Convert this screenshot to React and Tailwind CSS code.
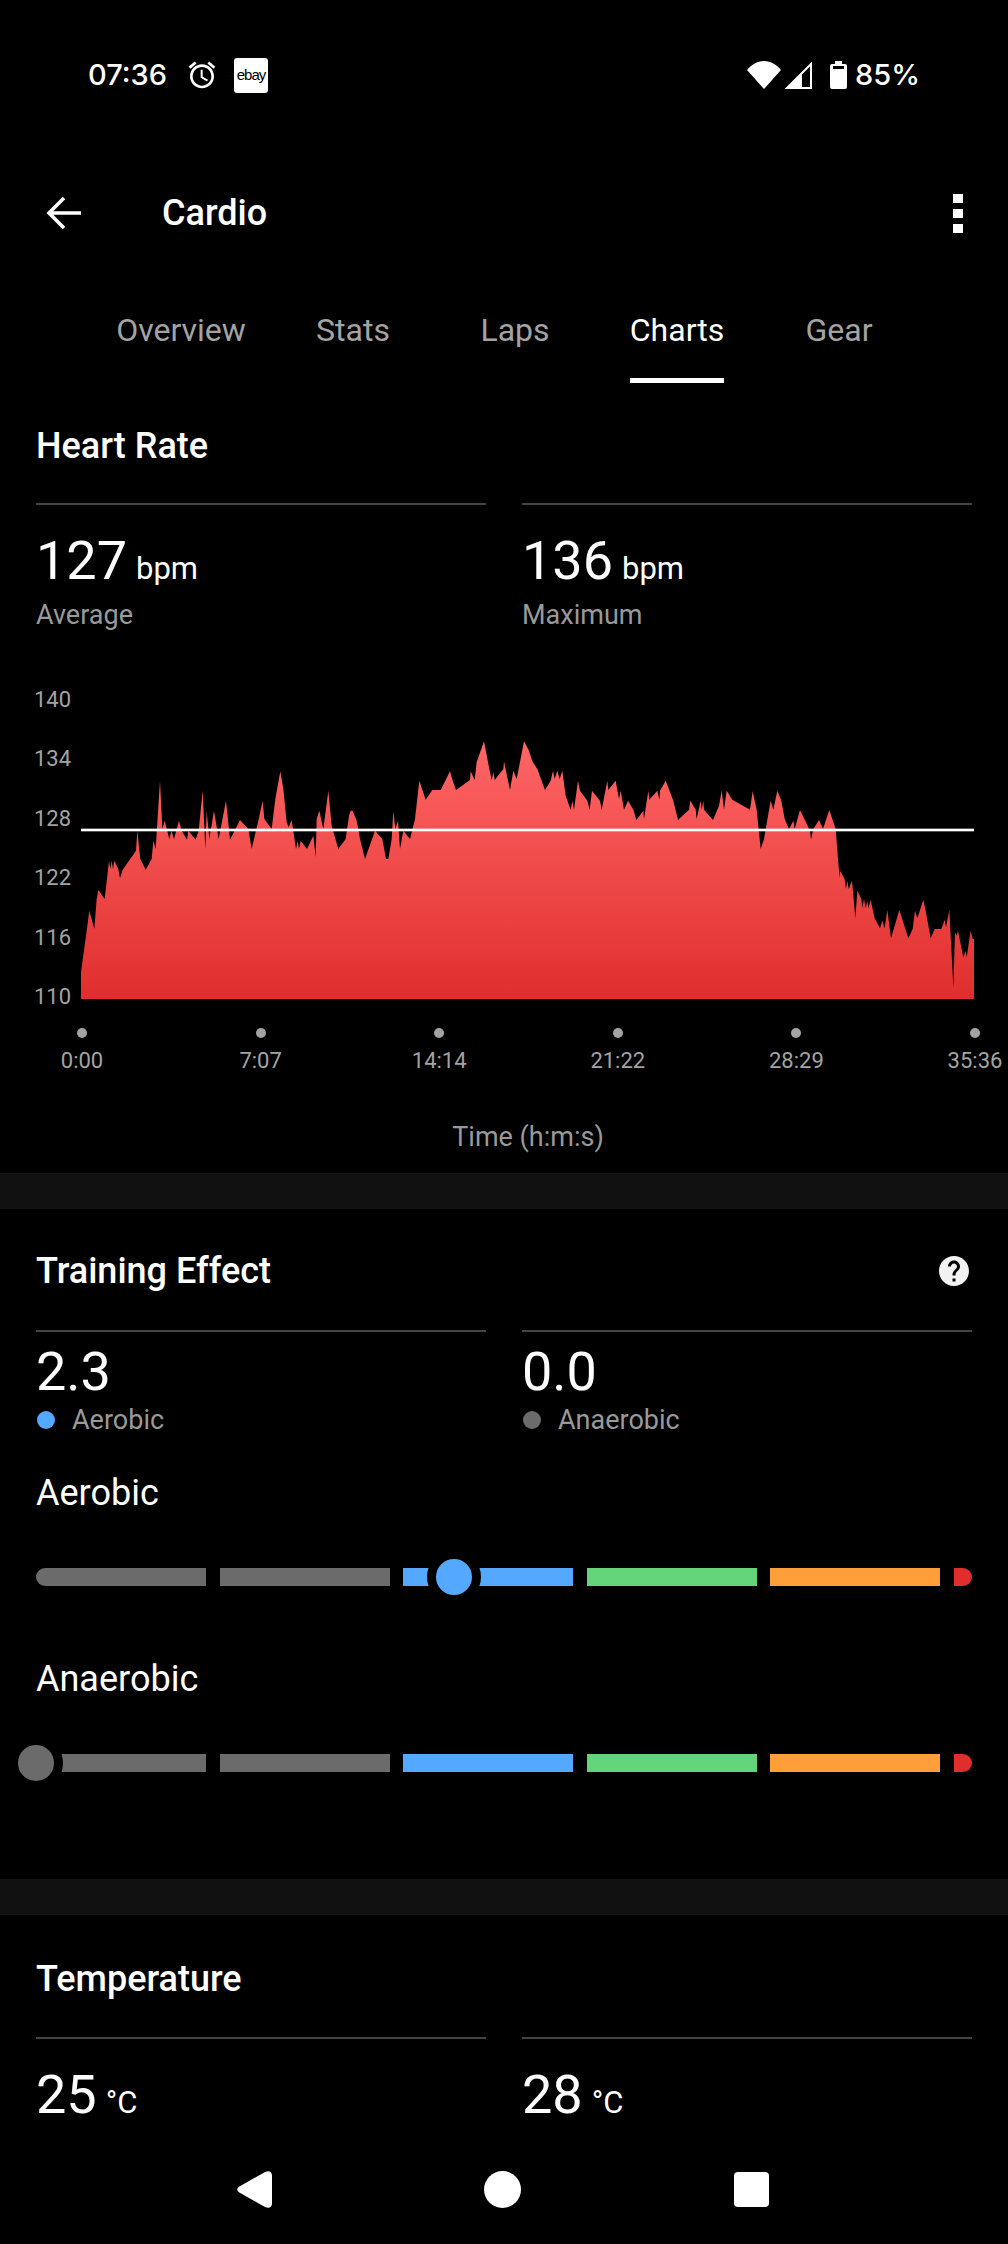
import React from "react";

const leftTrace = "243,960 243,880 247,850 258,770 268,695 283,750 290,660 295,633 314,660 327,545 331,570 335,545 339,570 343,545 355,570 360,598 368,572 408,515 412,455 421,540 437,572 455,540 460,485 467,510 480,305 487,450 494,425 508,480 514,455 522,480 537,425 545,455 561,482 565,455 587,482 596,455 608,335 616,510 620,395 628,480 642,395 656,480 678,365 690,482 720,423 745,450 755,510 775,425 788,365 793,420 815,450 826,360 841,277 850,330 860,430 866,445 875,423 888,510 893,485 897,510 902,485 921,510 940,470 947,535 950,420 958,395 970,450 985,335 995,440 1015,510 1037,480 1047,410 1052,395 1058,395 1070,425 1080,480 1095,540 1125,455 1147,480 1158,540 1165,540 1175,480 1180,395 1186,450 1194,425 1200,510 1210,455 1230,480 1245,420 1258,305 1277,362 1297,333 1322,333 1350,277 1358,305 1368,333 1410,303 1412,277 1424,303 1430,250 1452,187 1468,270 1475,303 1480,280 1484,303 1510,270";

const rightTrace = [
  [0, 247], [18, 333], [28, 275], [38, 300], [60, 187], [75, 215], [85, 247], [100, 270], [123, 333], [140, 305], [147, 275], [152, 300], [160, 275], [167, 300], [175, 275], [185, 350], [200, 392], [205, 365], [210, 392], [222, 305], [228, 335], [250, 365], [257, 392], [264, 335], [288, 365], [293, 392], [310, 305], [313, 333], [335, 305], [345, 360], [350, 335], [360, 392], [372, 365], [388, 392], [397, 423], [418, 395], [420, 420], [433, 335], [436, 362], [460, 335], [466, 362], [468, 335], [485, 305], [508, 365], [522, 423], [555, 392], [559, 365], [575, 392], [578, 420], [590, 365], [593, 392], [598, 365], [600, 392], [627, 423], [645, 380], [653, 335], [660, 392], [668, 335], [685, 362], [738, 392], [746, 337], [758, 392], [770, 510], [780, 480], [800, 365], [808, 392], [820, 335], [832, 365], [842, 420], [855, 450], [868, 425], [872, 450], [888, 393], [918, 455], [921, 482], [928, 450], [945, 423], [957, 450], [976, 393], [995, 450], [1002, 540], [1007, 598], [1008, 575], [1022, 600], [1026, 630], [1030, 605], [1034, 630], [1044, 605], [1054, 718], [1060, 635], [1072, 660], [1075, 688], [1080, 660], [1085, 688], [1090, 665], [1093, 688], [1100, 663], [1112, 718], [1128, 748], [1135, 725], [1142, 748], [1150, 693], [1161, 778], [1186, 693], [1213, 778], [1226, 750], [1233, 695], [1240, 718], [1258, 662], [1264, 690], [1275, 750], [1280, 778], [1292, 750], [1312, 750], [1322, 722], [1326, 745], [1336, 693], [1348, 925], [1353, 760], [1358, 770], [1362, 755], [1378, 835], [1385, 815], [1388, 835], [1400, 755], [1406, 780], [1410, 780], [1410, 960],
]
  .map(([x, y]) => `${x + 1512},${y}`)
  .join(" ");

const yLabels = ["140", "134", "128", "122", "116", "110"];
const xLabels = ["0:00", "7:07", "14:14", "21:22", "28:29", "35:36"];
const tabs = [
  { label: "Overview", width: "w-[182px]" },
  { label: "Stats", width: "w-[162px]" },
  { label: "Laps", width: "w-[162px]" },
  { label: "Charts", width: "w-[162px]", active: true },
  { label: "Gear", width: "w-[162px]" },
];

const Stat = ({ value, unit, pad = "pt-[24px]", children }) => (
  <div className={`w-[450px] border-t-2 border-[#444444] ${pad}`}>
    <div className="flex items-baseline">
      <span className="text-[54px] leading-[64px] text-white">{value}</span>
      {unit && <span className="ml-[9px] text-[31px] text-white">{unit}</span>}
    </div>
    {children}
  </div>
);

const Segment = ({ color, className = "" }) => (
  <div className={`h-[18px] w-[170px] ${color} ${className}`} />
);

const EffectBar = ({ thumbClass, thumbColor }) => (
  <div className="relative ml-[36px] flex w-[936px] items-center justify-between">
    <Segment color="bg-[#6b6b6b]" className="rounded-l-[9px]" />
    <Segment color="bg-[#6b6b6b]" />
    <Segment color="bg-[#55a8ff]" />
    <Segment color="bg-[#64d47a]" />
    <Segment color="bg-[#ff9f3a]" />
    <div className="h-[18px] w-[18px] rounded-r-[9px] bg-[#e02e2e]" />
    <div
      className={`absolute top-[-18px] h-[54px] w-[54px] rounded-full border-[9px] border-black ${thumbColor} ${thumbClass}`}
    />
  </div>
);

const App = () => {
  return (
    <div
      className="relative h-[2244px] w-[1008px] overflow-hidden bg-black text-white"
      style={{ fontFamily: "Roboto, sans-serif" }}
    >
      {/* status bar */}
      <div className="mt-[50px] flex h-[50px] items-center pl-[88px] pr-[88px] font-['Inter',sans-serif]">
        <span className="text-[29px] font-medium">07:36</span>
        <svg viewBox="0 0 24 24" className="ml-[19px] h-[32px] w-[32px]" fill="white">
          <path d="M22 5.72l-4.6-3.86-1.29 1.53 4.6 3.86L22 5.72zM7.88 3.39L6.6 1.86 2 5.71l1.29 1.53 4.59-3.85zM12.5 8H11v6l4.75 2.85.75-1.23-4-2.37V8zM12 4c-4.97 0-9 4.03-9 9s4.03 9 9 9 9-4.03 9-9-4.03-9-9-9zm0 16c-3.87 0-7-3.13-7-7s3.13-7 7-7 7 3.13 7 7-3.13 7-7 7z" />
        </svg>
        <div className="ml-[16px] flex h-[35px] w-[34px] items-center justify-center rounded-[3px] bg-white font-['Liberation_Sans',sans-serif] text-[15px] tracking-[-1px] text-black">
          ebay
        </div>
        <div className="flex-1" />
        <svg viewBox="0 0 34 28" className="h-[28px] w-[34px]" fill="white">
          <path d="M0 9C4 4 10 0 17 0s13 4 17 9L17 28z" />
        </svg>
        <svg viewBox="0 0 27 27" className="ml-[4px] h-[27px] w-[27px]">
          <path d="M26 2v24H2z" fill="none" stroke="white" strokeWidth="2" />
          <path d="M17 27V11L1 27z" fill="white" />
        </svg>
        <svg viewBox="0 0 17 28" className="ml-[18px] h-[28px] w-[17px]" fill="white">
          <path d="M5 0h7v3h3a2 2 0 0 1 2 2v21a2 2 0 0 1-2 2H2a2 2 0 0 1-2-2V5a2 2 0 0 1 2-2h3z" />
          <rect x="3" y="5" width="11" height="3" fill="black" />
        </svg>
        <span className="ml-[8px] text-[29px] font-medium">85%</span>
      </div>

      {/* toolbar */}
      <div className="mt-[73px] flex h-[80px] items-center pl-[46px] pr-[45px]">
        <svg viewBox="0 0 35 34" className="h-[34px] w-[35px]" fill="none" stroke="white" strokeWidth="3.6">
          <path d="M35 17H3M18 2L3 17l15 15" />
        </svg>
        <span className="ml-[81px] text-[36px] font-medium">Cardio</span>
        <div className="flex-1" />
        <div className="flex flex-col gap-[6px]">
          <div className="h-[9px] w-[10px] bg-white" />
          <div className="h-[9px] w-[10px] bg-white" />
          <div className="h-[9px] w-[10px] bg-white" />
        </div>
      </div>

      {/* tabs */}
      <div className="mt-[37px] flex h-[93px] pl-[90px]">
        {tabs.map((tab) => (
          <div key={tab.label} className={`${tab.width} flex justify-center`}>
            <div
              className={`h-[93px] text-[32px] leading-[80px] ${
                tab.active ? "border-b-[5px] border-white text-white" : "text-[#a3a3a3]"
              }`}
            >
              {tab.label}
            </div>
          </div>
        ))}
      </div>

      {/* heart rate */}
      <div className="mt-[43px] h-[40px] pl-[36px] text-[36px] font-medium leading-[40px]">Heart Rate</div>
      <div className="mt-[37px] flex justify-between px-[36px]">
        <Stat value="127" unit="bpm">
          <div className="mt-[4px] text-[27px] leading-[36px] text-[#999999]">Average</div>
        </Stat>
        <Stat value="136" unit="bpm">
          <div className="mt-[4px] text-[27px] leading-[36px] text-[#999999]">Maximum</div>
        </Stat>
      </div>

      {/* chart */}
      <div className="mt-[54px] flex h-[322px]">
        <div className="flex h-[322px] w-[81px] flex-col justify-between pl-[34px] pt-[1px] text-[22px] leading-[24px] text-[#a3a3a3]">
          {yLabels.map((label) => (
            <div key={label}>{label}</div>
          ))}
        </div>
        <svg viewBox="243 24 2679 966" className="h-[322px] w-[893px]">
          <defs>
            <linearGradient id="hrFill" gradientUnits="userSpaceOnUse" x1="0" y1="187" x2="0" y2="960">
              <stop offset="0" stopColor="#ff6666" />
              <stop offset="1" stopColor="#e02e2e" />
            </linearGradient>
          </defs>
          <polygon points={`${leftTrace} ${rightTrace}`} fill="url(#hrFill)" />
          <rect x="243" y="449" width="2679" height="8" fill="white" />
        </svg>
      </div>
      <div className="mt-[19px] flex w-[1008px] justify-between pl-[82px] pr-[33px]">
        {xLabels.map((label) => (
          <div key={label} className="flex w-0 flex-col items-center">
            <div className="h-[10px] w-[10px] shrink-0 rounded-full bg-[#a3a3a3]" />
            <div className="mt-[6px] text-[22px] leading-[34px] text-[#a3a3a3]">{label}</div>
          </div>
        ))}
      </div>
      <div className="mt-[41px] pl-[48px] text-center text-[27px] leading-[36px] text-[#999999]">Time (h:m:s)</div>
      <div className="mt-[18px] h-[36px] bg-[#111111]" />

      {/* training effect */}
      <div className="mt-[42px] flex h-[40px] items-center justify-between pl-[36px] pr-[39px]">
        <span className="text-[36px] font-medium leading-[40px]">Training Effect</span>
        <svg viewBox="2 2 20 20" className="h-[30px] w-[30px]" fill="#f2f2f2">
          <path d="M12 2C6.48 2 2 6.48 2 12s4.48 10 10 10 10-4.48 10-10S17.52 2 12 2zm1 17h-2v-2h2v2zm2.07-7.75l-.9.92C13.45 12.9 13 13.5 13 15h-2v-.5c0-1.1.45-2.1 1.17-2.83l1.24-1.26c.37-.36.59-.86.59-1.41 0-1.1-.9-2-2-2s-2 .9-2 2H8c0-2.21 1.79-4 4-4s4 1.79 4 4c0 .88-.36 1.68-.93 2.25z" />
        </svg>
      </div>
      <div className="mt-[39px] flex justify-between px-[36px]">
        <Stat value="2.3" pad="pt-[8px]">
          <div className="-mt-[1px] flex h-[34px] items-center pl-[1px] text-[27px] text-[#999999]">
            <div className="h-[18px] w-[18px] rounded-full bg-[#55a8ff]" />
            <span className="ml-[17px]">Aerobic</span>
          </div>
        </Stat>
        <Stat value="0.0" pad="pt-[8px]">
          <div className="-mt-[1px] flex h-[34px] items-center pl-[1px] text-[27px] text-[#999999]">
            <div className="h-[18px] w-[18px] rounded-full bg-[#6b6b6b]" />
            <span className="ml-[17px]">Anaerobic</span>
          </div>
        </Stat>
      </div>
      <div className="mt-[36px] h-[40px] pl-[36px] text-[36px] leading-[40px]">Aerobic</div>
      <div className="mt-[55px]">
        <EffectBar thumbClass="left-[391px]" thumbColor="bg-[#55a8ff]" />
      </div>
      <div className="mt-[73px] h-[40px] pl-[36px] text-[36px] leading-[40px]">Anaerobic</div>
      <div className="mt-[55px]">
        <EffectBar thumbClass="-left-[27px]" thumbColor="bg-[#6b6b6b]" />
      </div>
      <div className="mt-[107px] h-[36px] bg-[#111111]" />

      {/* temperature */}
      <div className="mt-[44px] h-[40px] pl-[36px] text-[36px] font-medium leading-[40px]">Temperature</div>
      <div className="mt-[38px] flex justify-between px-[36px]">
        <Stat value="25" unit="°C" />
        <Stat value="28" unit="°C" />
      </div>

      {/* nav bar */}
      <div className="absolute bottom-0 left-0 flex h-[109px] w-[1008px] items-center bg-black pb-[1px] pl-[237px]">
        <svg viewBox="0 0 35 37" className="h-[37px] w-[35px]" fill="white">
          <path d="M1.5 16L28 1Q34-1.5 35 4V33Q34 38.5 28 36L1.5 21Q-1 18.5 1.5 16z" />
        </svg>
        <div className="ml-[212px] h-[37px] w-[37px] rounded-full bg-white" />
        <div className="ml-[213px] h-[35px] w-[35px] rounded-[4px] bg-white" />
      </div>
    </div>
  );
};

export default App;
